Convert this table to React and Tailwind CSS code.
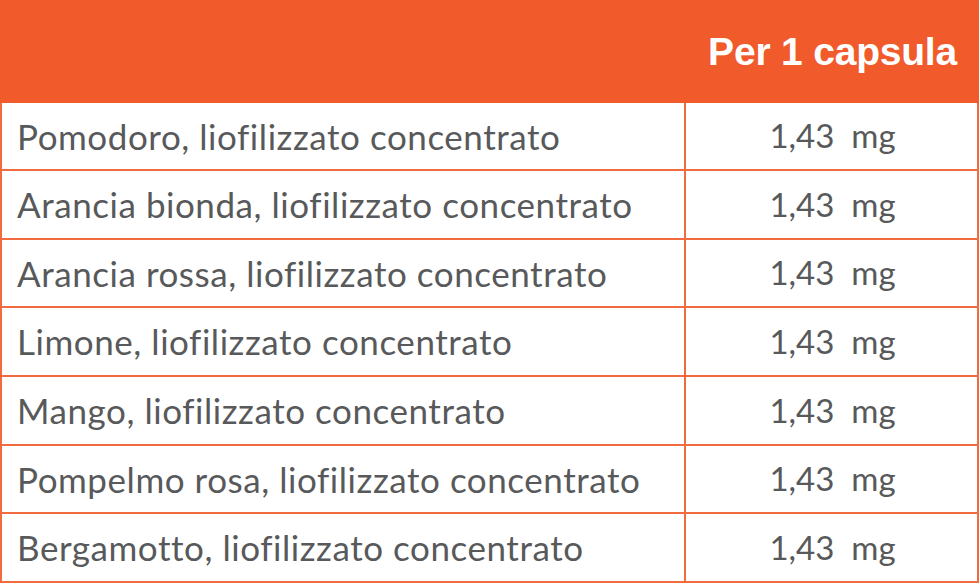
import React from "react";

const rows = [
  { name: "Pomodoro, liofilizzato concentrato", h: "h-[68px]" },
  { name: "Arancia bionda, liofilizzato concentrato", h: "h-[69px]" },
  { name: "Arancia rossa, liofilizzato concentrato", h: "h-[68px]" },
  { name: "Limone, liofilizzato concentrato", h: "h-[69px]" },
  { name: "Mango, liofilizzato concentrato", h: "h-[69px]" },
  { name: "Pompelmo rosa, liofilizzato concentrato", h: "h-[68px]" },
  { name: "Bergamotto, liofilizzato concentrato", h: "h-[69px]" },
];

const App = () => {
  return (
    <div className="w-[980px] h-[586px] bg-white">
      <div className="w-[979px]">
        <div className="h-[103px] bg-[#f15a2b] flex items-center justify-end pr-[22px] pt-[1px]">
          <span className="text-white font-bold text-[39px] font-['Liberation_Sans',Arial,sans-serif] tracking-[-0.2px]">
            Per 1 capsula
          </span>
        </div>
        <div className="border-x-2 border-[#f26b3f]">
          {rows.map((row, i) => (
            <div
              key={i}
              className={`${row.h} flex border-b-2 border-[#f26b3f] font-['Lato',sans-serif] text-[#58595b] [font-variant-ligatures:none]`}
            >
              <div className="w-[684px] border-r-2 border-[#f26b3f] flex items-center pl-[15px] text-[35px] tracking-[0.55px]">
                {row.name}
              </div>
              <div className="flex-1 flex items-center justify-center pl-[2px] whitespace-pre text-[33px]">
                {"1,43  mg"}
              </div>
            </div>
          ))}
        </div>
      </div>
    </div>
  );
};

export default App;
